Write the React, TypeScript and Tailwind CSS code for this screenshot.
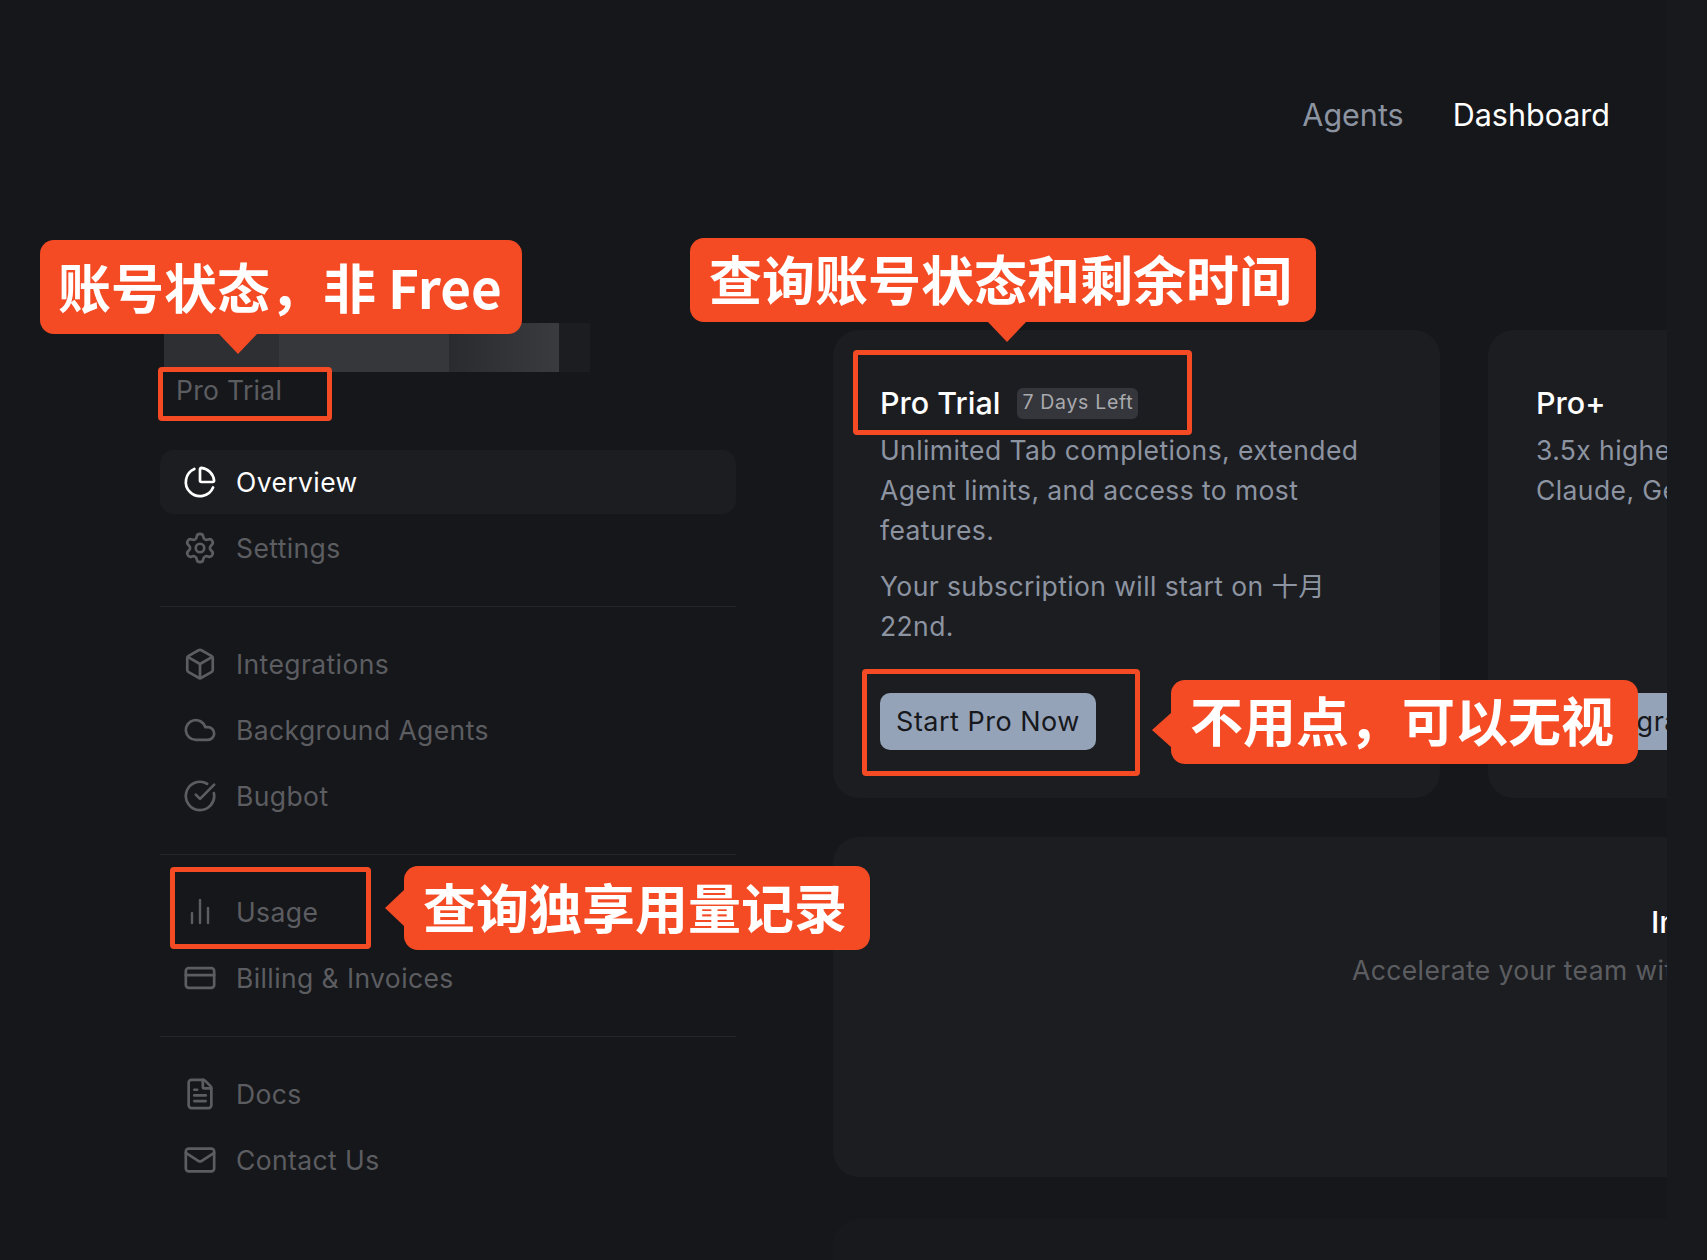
import React from 'react';
import {
  Box,
  ChartPie,
  CircleCheckBig,
  Cloud,
  CreditCard,
  FileText,
  Mail,
  Settings,
} from 'lucide-react';

type NavEntry = { label: string; icon: React.ElementType; active?: boolean };

const UsageIcon: React.FC = () => (
  <svg width={34} height={34} viewBox="0 0 34 34" fill="none" stroke="currentColor" strokeWidth={2.4} strokeLinecap="round">
    <path d="M9 18v10" />
    <path d="M17 5v23" />
    <path d="M25 13v15" />
  </svg>
);

const navGroups: NavEntry[][] = [
  [
    { label: 'Overview', icon: ChartPie, active: true },
    { label: 'Settings', icon: Settings },
  ],
  [
    { label: 'Integrations', icon: Box },
    { label: 'Background Agents', icon: Cloud },
    { label: 'Bugbot', icon: CircleCheckBig },
  ],
  [
    { label: 'Usage', icon: UsageIcon },
    { label: 'Billing & Invoices', icon: CreditCard },
  ],
  [
    { label: 'Docs', icon: FileText },
    { label: 'Contact Us', icon: Mail },
  ],
];

const NavItem: React.FC<NavEntry> = ({ label, icon: Icon, active }) => (
  <div
    className={
      active
        ? 'flex items-center h-16 pl-[23px] gap-[19px] rounded-[14px] bg-[#1c1d21] text-white'
        : 'flex items-center h-16 pl-[23px] gap-[19px] rounded-[14px] text-[#5c5d61]'
    }
  >
    <Icon size={34} strokeWidth={1.9} />
    <span className="pt-[2px] text-[26.5px] tracking-[0.4px]">{label}</span>
  </div>
);

const Sidebar: React.FC = () => (
  <aside className="w-[576px] shrink-0">
    {/* redacted account name */}
    <div className="flex w-[426px] h-[49px] ml-[4px]">
      <div className="w-[115px] bg-[#2e2f33]" />
      <div className="w-[170px] bg-[#36373b]" />
      <div className="w-[110px] bg-linear-to-r from-[#2a2b2f] to-[#3a3b3f]" />
      <div className="w-[31px] bg-[#1c1d21]" />
    </div>
    <p className="ml-[16px] h-[36px] leading-[36px] text-[26.5px] tracking-[0.3px] text-[#5c5d61]">Pro Trial</p>

    <nav className="mt-[42px]">
      {navGroups.map((group, i) => (
        <div
          key={i}
          className={
            i < navGroups.length - 1
              ? 'flex flex-col gap-[2px] pb-[26px] mb-[25px] border-b border-[#25262a]'
              : 'flex flex-col gap-[2px]'
          }
        >
          {group.map((item) => (
            <NavItem key={item.label} {...item} />
          ))}
        </div>
      ))}
    </nav>
  </aside>
);

const Plans: React.FC = () => (
  <div className="flex gap-[48px] h-[468px]">
    <section className="w-[607px] shrink-0 rounded-[26px] bg-[#1c1d21] pl-[47px] pt-[55px]">
      <div className="flex items-center h-[36px] gap-[17px]">
        <h2 className="text-[30.5px] font-medium text-white">Pro Trial</h2>
        <span className="flex items-center h-[31px] px-[5px] rounded-[6px] bg-[#35363b] text-[19.5px] tracking-[0.7px] text-[#a9aaae]">
          7 Days Left
        </span>
      </div>
      <p className="mt-[9px] w-[510px] text-[26.5px] leading-[40px] tracking-[0.4px] text-[#8d94a1]">
        Unlimited Tab completions, extended Agent limits, and access to most features.
      </p>
      <p className="mt-[16px] w-[510px] text-[26.5px] leading-[40px] tracking-[0.4px] text-[#8d94a1]">
        Your subscription will start on 十月 22nd.
      </p>
      <button className="mt-[47px] w-[216px] h-[57px] pt-[2px] rounded-[10px] bg-[#94a3b8] text-[27px] tracking-[0.5px] text-[#17181c]">
        Start Pro Now
      </button>
    </section>

    <section className="w-[607px] shrink-0 rounded-[26px] bg-[#1c1d21] pl-[48px] pt-[55px]">
      <h2 className="h-[36px] leading-[36px] text-[30.5px] font-medium text-white">Pro+</h2>
      <p className="mt-[9px] w-[510px] text-[26.5px] leading-[40px] tracking-[0.4px] text-[#8d94a1]">
        3.5x higher limits than Pro on OpenAI, Claude, Gemini models.
      </p>
      <button className="mt-[183px] w-[216px] h-[57px] pl-[63px] pt-[2px] text-left rounded-[10px] bg-[#94a3b8] text-[27px] tracking-[0.5px] text-[#17181c]">
        Upgrade
      </button>
    </section>
  </div>
);

const Callout: React.FC<{ className: string; text: string; children: React.ReactNode }> = ({
  className,
  text,
  children,
}) => (
  <div className={className}>
    <span className="text-[53px] font-bold leading-none text-white whitespace-nowrap font-['Noto_Sans_CJK_SC',sans-serif]">
      {text}
    </span>
    {children}
  </div>
);

const App: React.FC = () => (
  <div className="relative h-[1260px] overflow-hidden bg-[#18191d] font-['Inter','Noto_Sans_CJK_SC',sans-serif]">
    <div className="w-[1667px] h-[1260px] overflow-hidden bg-[#16171b]">
      <header className="flex justify-end gap-[49px] h-[323px] pt-[97px] pr-[57px] text-[30.5px] leading-[36px]">
        <span className="text-[#8d94a1]">Agents</span>
        <span className="text-white">Dashboard</span>
      </header>

      <div className="flex pl-[160px] gap-[97px]">
        <Sidebar />
        <main className="mt-[7px] w-[834px] shrink-0 overflow-hidden">
          <Plans />
          <section className="mt-[39px] w-[1200px] h-[340px] rounded-[26px] bg-[#1c1d21] pt-[67px]">
            <h3 className="pl-[818px] h-[36px] leading-[36px] text-[30.5px] font-medium text-white whitespace-nowrap">
              Invite your team
            </h3>
            <p className="mt-[10px] pl-[519px] text-[26.5px] leading-[40px] tracking-[0.4px] text-[#5c5d61] whitespace-nowrap">
              Accelerate your team with admin controls
            </p>
          </section>
          <div className="mt-[42px] w-[1200px] h-[80px] rounded-t-[26px] bg-[#18191d]" />
        </main>
      </div>
    </div>

    {/* annotations drawn over the screenshot */}
    <div className="absolute left-[158px] top-[367px] w-[174px] h-[54px] rounded-[4px] border-[5px] border-[#f54b25]" />
    <div className="absolute left-[853px] top-[350px] w-[339px] h-[85px] rounded-[4px] border-[5px] border-[#f54b25]" />
    <div className="absolute left-[862px] top-[669px] w-[278px] h-[107px] rounded-[4px] border-[5px] border-[#f54b25]" />
    <div className="absolute left-[170px] top-[867px] w-[201px] h-[82px] rounded-[4px] border-[5px] border-[#f54b25]" />

    <Callout className="absolute left-[40px] top-[240px] w-[482px] h-[94px] pl-[18px] pb-[2px] flex items-center rounded-[14px] bg-[#f54b25]" text="账号状态，非 Free">
      <div className="absolute left-[179px] top-[94px] border-x-[19px] border-t-[20px] border-x-transparent border-t-[#f54b25]" />
    </Callout>
    <Callout className="absolute left-[690px] top-[238px] w-[626px] h-[84px] pl-[19px] pb-[4px] flex items-center rounded-[14px] bg-[#f54b25]" text="查询账号状态和剩余时间">
      <div className="absolute left-[298px] top-[84px] border-x-[19px] border-t-[20px] border-x-transparent border-t-[#f54b25]" />
    </Callout>
    <Callout className="absolute left-[1171px] top-[680px] w-[467px] h-[84px] pl-[19px] pb-[5px] flex items-center rounded-[14px] bg-[#f54b25]" text="不用点，可以无视">
      <div className="absolute left-[-19px] top-[33px] border-y-[17px] border-r-[19px] border-y-transparent border-r-[#f54b25]" />
    </Callout>
    <Callout className="absolute left-[404px] top-[866px] w-[466px] h-[84px] pl-[19px] pb-[4px] flex items-center rounded-[14px] bg-[#f54b25]" text="查询独享用量记录">
      <div className="absolute left-[-19px] top-[24px] border-y-[18px] border-r-[19px] border-y-transparent border-r-[#f54b25]" />
    </Callout>
  </div>
);

export default App;
